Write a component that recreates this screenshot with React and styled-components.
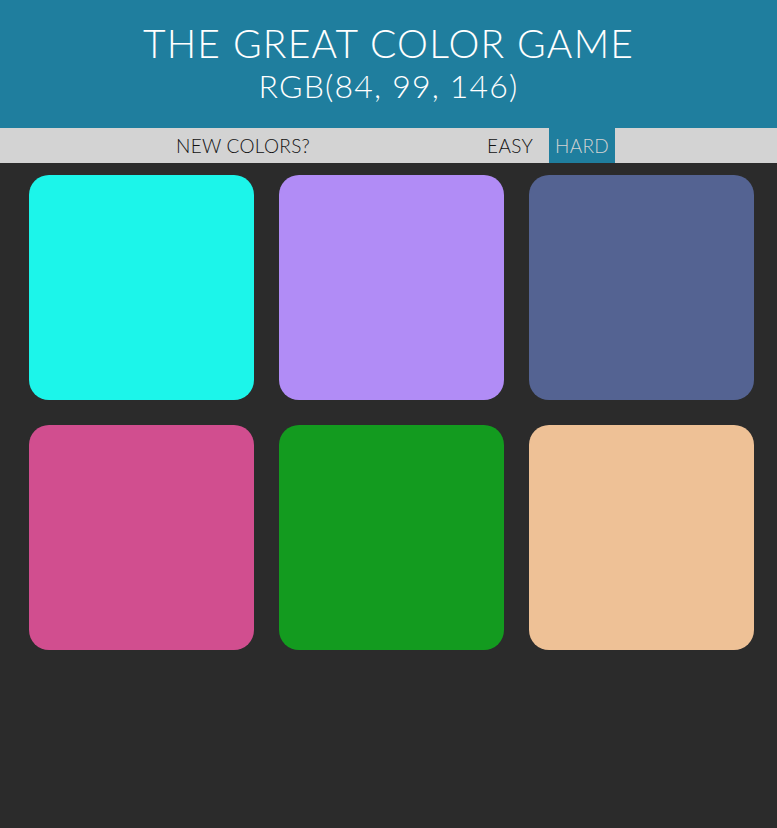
import React from "react";
import styled, { createGlobalStyle } from "styled-components";

const GlobalStyle = createGlobalStyle`
  html, body {
    margin: 0;
    padding: 0;
    background: #2b2b2b;
  }
  body {
    font-family: "Lato", "Open Sans", sans-serif;
    font-weight: 300;
  }
`;

const Header = styled.header`
  box-sizing: border-box;
  height: 128px;
  padding-top: 22px;
  background: #1f7e9e;
  color: #ffffff;
  display: flex;
  flex-direction: column;
  align-items: center;
  gap: 4px;
  text-transform: uppercase;
`;

const Title = styled.h1`
  margin: 0;
  font-size: 39px;
  font-weight: 300;
  line-height: 42px;
  letter-spacing: 1.2px;
`;

const Target = styled.div`
  font-size: 32px;
  font-weight: 300;
  line-height: 36px;
  letter-spacing: 1.2px;
`;

const Stripe = styled.nav`
  height: 35px;
  background: #d3d3d3;
  display: flex;
  justify-content: center;
  align-items: stretch;
  padding-left: 6px;
`;

const Button = styled.button`
  border: none;
  outline: none;
  margin: 0;
  padding: 0 ${(p) => (p.$selected ? "6px" : "8px")};
  height: 35px;
  font-family: inherit;
  font-weight: 300;
  font-size: 19px;
  letter-spacing: 0.3px;
  text-transform: uppercase;
  color: ${(p) => (p.$selected ? "#d3d3d3" : "#111111")};
  background: ${(p) => (p.$selected ? "#1f7e9e" : "transparent")};
  cursor: pointer;
`;

const Message = styled.span`
  display: inline-block;
  width: 161px;
`;

const Spacer = styled.span`
  display: inline-block;
  width: 8px;
`;

const Board = styled.main`
  display: grid;
  grid-template-columns: repeat(3, 225px);
  grid-auto-rows: 225px;
  gap: 25px;
  padding: 12px 0 0 29px;
`;

const Square = styled.div`
  background: ${(p) => p.$color};
  border-radius: 20px;
`;

const colors = [
  "rgb(28, 245, 234)",
  "rgb(177, 140, 246)",
  "rgb(84, 99, 146)",
  "rgb(209, 78, 143)",
  "rgb(19, 155, 31)",
  "rgb(238, 193, 150)",
];

export default function App() {
  return (
    <>
      <GlobalStyle />
      <Header>
        <Title>The Great Color Game</Title>
        <Target>RGB(84, 99, 146)</Target>
      </Header>
      <Stripe>
        <Button>New Colors?</Button>
        <Message />
        <Button>Easy</Button>
        <Spacer />
        <Button $selected>Hard</Button>
      </Stripe>
      <Board>
        {colors.map((c) => (
          <Square key={c} $color={c} />
        ))}
      </Board>
    </>
  );
}
